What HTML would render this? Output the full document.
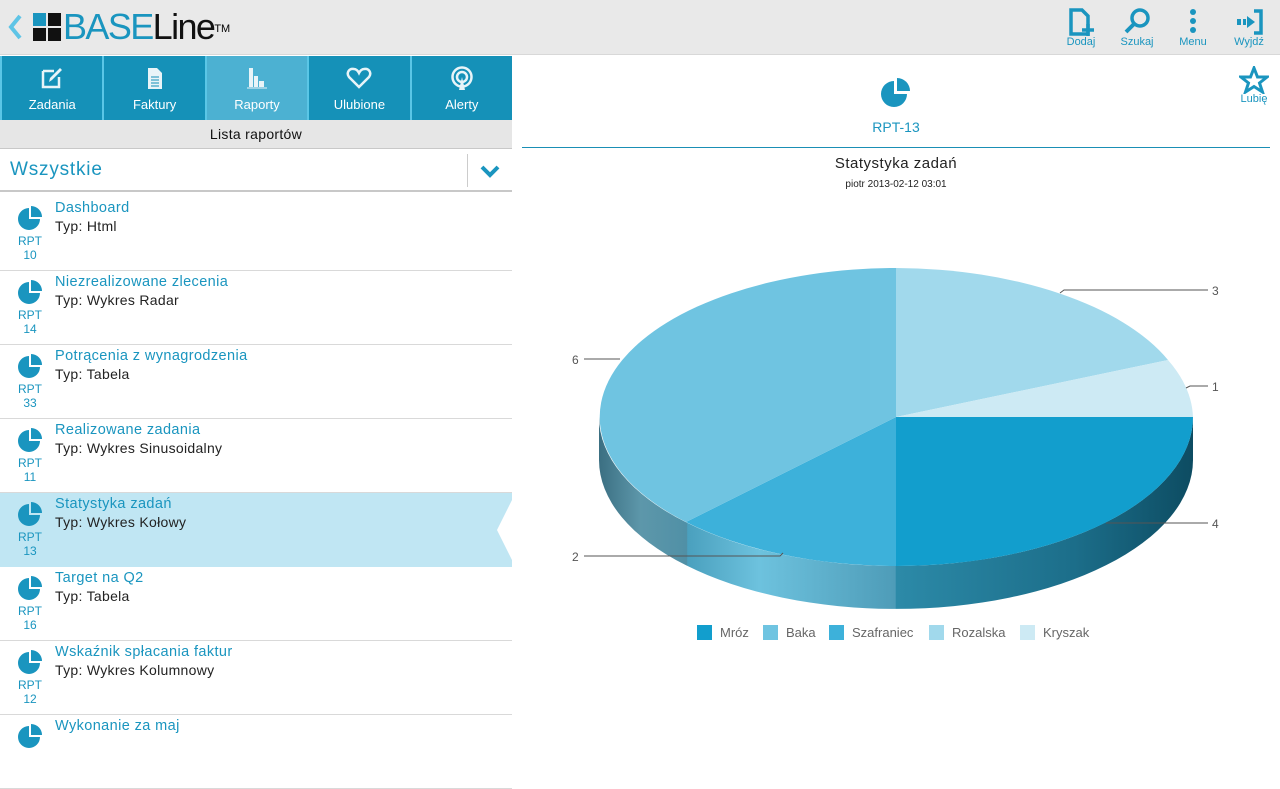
<!DOCTYPE html>
<html><head><meta charset="utf-8"><style>
*{margin:0;padding:0;box-sizing:border-box}
body{width:1280px;height:726px;overflow:hidden;background:#fff;font-family:"Liberation Sans",sans-serif;position:relative}
.hdr{position:absolute;left:0;top:0;width:1280px;height:55px;background:#e9e9e9;border-bottom:1px solid #d8d8d8}
.abs{position:absolute}
.tabs{position:absolute;left:0;top:56px;width:512px;height:64px;background:#1591b8;display:flex}
.tab{flex:1;border-left:2px solid #5ac6e6;color:#fff;font-size:13px;text-align:center;position:relative}
.tab span{position:absolute;left:0;right:0;top:41px}
.tab svg{position:absolute;left:50%;top:10px;transform:translateX(-50%)}
.lista{position:absolute;left:0;top:120px;width:512px;height:29px;background:#e6e6e6;border-bottom:1px solid #c8c8c8;text-align:center;font-size:14px;line-height:28px;color:#111;letter-spacing:.3px}
.dd{position:absolute;left:0;top:149px;width:512px;height:43px;background:#fff;border-bottom:2px solid #c8c8c8}
.item{position:absolute;left:0;width:512px;height:74px;border-bottom:1px solid #d9d9d9}
.item .t{position:absolute;left:55px;top:3px;color:#1a95bf;font-size:14.5px;letter-spacing:.4px}
.item .s{position:absolute;left:55px;top:21px;color:#222;font-size:14px;letter-spacing:.3px}
.item .r{position:absolute;left:10px;top:37px;width:40px;text-align:center;color:#1a95bf;font-size:12px;line-height:14px}
.item svg{position:absolute;left:17px;top:8px}
.hb{position:absolute;color:#1a95bf;font-size:11px;text-align:center;width:50px}
</style></head><body>
<div class="hdr"></div>
<svg class="abs" style="left:4px;top:12px" width="20" height="30"><path d="M16 4 L7 15 L16 26" stroke="#5ec4e6" stroke-width="4" fill="none"/></svg>
<div class="abs" style="left:33px;top:13px;width:13px;height:13px;background:#1a95bf"></div>
<div class="abs" style="left:48px;top:13px;width:13px;height:13px;background:#111"></div>
<div class="abs" style="left:33px;top:28px;width:13px;height:13px;background:#111"></div>
<div class="abs" style="left:48px;top:28px;width:13px;height:13px;background:#111"></div>
<div class="abs" style="left:63px;top:6px;font-size:36px;letter-spacing:-1.6px;line-height:42px"><span style="color:#1a95bf">BASE</span><span style="color:#111">Line</span><sup style="font-size:11px;vertical-align:top;position:relative;top:2px;letter-spacing:0">TM</sup></div>

<svg class="abs" style="left:1068px;top:8px" width="28" height="28"><path d="M3 2 H14 L20 8 V26 H3 Z" fill="none" stroke="#1a95bf" stroke-width="3.5"/><path d="M20 16 V28 M14 22 H26" stroke="#1a95bf" stroke-width="3.5"/></svg>
<svg class="abs" style="left:1122px;top:7px" width="30" height="28"><circle cx="18" cy="11" r="8" fill="none" stroke="#1a95bf" stroke-width="3.5"/><path d="M12 17 L4 25" stroke="#1a95bf" stroke-width="4"/></svg>
<svg class="abs" style="left:1185px;top:8px" width="16" height="28"><circle cx="8" cy="4" r="3" fill="#1a95bf"/><circle cx="8" cy="13" r="3" fill="#1a95bf"/><circle cx="8" cy="22" r="3" fill="#1a95bf"/></svg>
<svg class="abs" style="left:1235px;top:9px" width="30" height="26"><path d="M2 10h4v6H2zM8 10h3v6H8z" fill="#1a95bf"/><path d="M12 7 L20 13 L12 19 Z M12 10 H14 V16 H12Z" fill="#1a95bf"/><path d="M19 2 H26 V24 H19" fill="none" stroke="#1a95bf" stroke-width="3.5"/></svg>
<div class="hb" style="left:1056px;top:36px">Dodaj</div>
<div class="hb" style="left:1112px;top:36px">Szukaj</div>
<div class="hb" style="left:1168px;top:36px">Menu</div>
<div class="hb" style="left:1224px;top:36px">Wyjdź</div>

<div class="tabs">
<div class="tab"><svg width="24" height="24"><path d="M3 5h11M3 5v16h16v-10" fill="none" stroke="#e8f4f8" stroke-width="2.5"/><path d="M9 16 L10 12 L20 2 L22 4 L12 14 Z" fill="#e8f4f8"/></svg><span>Zadania</span></div>
<div class="tab"><svg width="24" height="24"><path d="M5 2h9l5 5v16H5z" fill="#e8f4f8"/><path d="M8 11h8M8 14h8M8 17h8M8 20h8" stroke="#1591b8" stroke-width="1"/></svg><span>Faktury</span></div>
<div class="tab" style="background:#4cb1d2"><svg width="24" height="24"><path d="M4 2h4v19H4zM9 10h4v11H9zM14 15h5v6h-5z" fill="#e8f4f8"/><path d="M2 22h20" stroke="#e8f4f8"/></svg><span>Raporty</span></div>
<div class="tab"><svg width="26" height="24"><path d="M13 21 L3 11 C0 7 3 2 8 3 C10 3 12 5 13 7 C14 5 16 3 18 3 C23 2 26 7 23 11 Z" fill="none" stroke="#e8f4f8" stroke-width="2.5"/></svg><span>Ulubione</span></div>
<div class="tab"><svg width="26" height="26"><circle cx="13" cy="11" r="9.5" fill="none" stroke="#e8f4f8" stroke-width="2.5"/><circle cx="13" cy="11" r="5" fill="none" stroke="#e8f4f8" stroke-width="2.5"/><path d="M10 24 L13 11 L16 24Z" fill="#e8f4f8"/></svg><span>Alerty</span></div>
</div>
<div class="lista">Lista raportów</div>
<div class="dd"><div class="abs" style="left:10px;top:10px;font-size:19px;color:#1a95bf;letter-spacing:.8px">Wszystkie</div><div class="abs" style="left:467px;top:5px;width:1px;height:33px;background:#ccc"></div><svg class="abs" style="left:480px;top:15px" width="20" height="14"><path d="M2 3 L10 11 L18 3" fill="none" stroke="#1a95bf" stroke-width="4"/></svg></div>

<div class="item" style="top:197px"><svg width="26" height="26"><path d="M12 3 A11 11 0 1 0 23 14 H12Z" fill="#1a95bf"/><path d="M14 1 A11 11 0 0 1 25 12 H14Z" fill="#1a95bf"/></svg><div class="t">Dashboard</div><div class="s">Typ: Html</div><div class="r">RPT<br>10</div></div>
<div class="item" style="top:271px"><svg width="26" height="26"><path d="M12 3 A11 11 0 1 0 23 14 H12Z" fill="#1a95bf"/><path d="M14 1 A11 11 0 0 1 25 12 H14Z" fill="#1a95bf"/></svg><div class="t">Niezrealizowane zlecenia</div><div class="s">Typ: Wykres Radar</div><div class="r">RPT<br>14</div></div>
<div class="item" style="top:345px"><svg width="26" height="26"><path d="M12 3 A11 11 0 1 0 23 14 H12Z" fill="#1a95bf"/><path d="M14 1 A11 11 0 0 1 25 12 H14Z" fill="#1a95bf"/></svg><div class="t">Potrącenia z wynagrodzenia</div><div class="s">Typ: Tabela</div><div class="r">RPT<br>33</div></div>
<div class="item" style="top:419px"><svg width="26" height="26"><path d="M12 3 A11 11 0 1 0 23 14 H12Z" fill="#1a95bf"/><path d="M14 1 A11 11 0 0 1 25 12 H14Z" fill="#1a95bf"/></svg><div class="t">Realizowane zadania</div><div class="s">Typ: Wykres Sinusoidalny</div><div class="r">RPT<br>11</div></div>
<div class="item" style="top:493px;background:#c0e6f3;border-bottom:none"><svg width="26" height="26"><path d="M12 3 A11 11 0 1 0 23 14 H12Z" fill="#1a95bf"/><path d="M14 1 A11 11 0 0 1 25 12 H14Z" fill="#1a95bf"/></svg><div class="t">Statystyka zadań</div><div class="s">Typ: Wykres Kołowy</div><div class="r">RPT<br>13</div><svg style="position:absolute;left:496px;top:7px" width="16" height="60"><path d="M16 0 L1 30 L16 60Z" fill="#fff"/></svg></div>
<div class="item" style="top:567px"><svg width="26" height="26"><path d="M12 3 A11 11 0 1 0 23 14 H12Z" fill="#1a95bf"/><path d="M14 1 A11 11 0 0 1 25 12 H14Z" fill="#1a95bf"/></svg><div class="t">Target na Q2</div><div class="s">Typ: Tabela</div><div class="r">RPT<br>16</div></div>
<div class="item" style="top:641px"><svg width="26" height="26"><path d="M12 3 A11 11 0 1 0 23 14 H12Z" fill="#1a95bf"/><path d="M14 1 A11 11 0 0 1 25 12 H14Z" fill="#1a95bf"/></svg><div class="t">Wskaźnik spłacania faktur</div><div class="s">Typ: Wykres Kolumnowy</div><div class="r">RPT<br>12</div></div>
<div class="item" style="top:715px"><svg width="26" height="26"><path d="M12 3 A11 11 0 1 0 23 14 H12Z" fill="#1a95bf"/><path d="M14 1 A11 11 0 0 1 25 12 H14Z" fill="#1a95bf"/></svg><div class="t">Wykonanie za maj</div></div>

<svg class="abs" style="left:880px;top:77px" width="34" height="32"><path d="M14 4 A13 13 0 1 0 27 17 H14Z" fill="#1a95bf"/><path d="M17 1 A13 13 0 0 1 30 14 H17Z" fill="#1a95bf"/></svg>
<div class="abs" style="left:846px;top:119px;width:100px;text-align:center;color:#1a95bf;font-size:14px">RPT-13</div>
<svg class="abs" style="left:1239px;top:66px" width="30" height="28"><path d="M15 2 L18.5 11 L28 11 L20.5 17 L23.5 26 L15 20.5 L6.5 26 L9.5 17 L2 11 L11.5 11 Z" fill="none" stroke="#1a95bf" stroke-width="3"/></svg>
<div class="hb" style="left:1229px;top:93px">Lubię</div>
<div class="abs" style="left:522px;top:147px;width:748px;height:1px;background:#1a8fb5"></div>
<div class="abs" style="left:746px;top:155px;width:300px;text-align:center;font-size:15px;color:#222;letter-spacing:.5px">Statystyka zadań</div>
<div class="abs" style="left:746px;top:179px;width:300px;text-align:center;font-size:10px;color:#222">piotr 2013-02-12 03:01</div>

<svg class="abs" style="left:0;top:0" width="1280" height="726">
<defs>
<linearGradient id="g1" x1="599" x2="1193" y1="0" y2="0" gradientUnits="userSpaceOnUse">
<stop offset="0" stop-color="#3b6f82"/><stop offset="0.07" stop-color="#5d97aa"/><stop offset="0.148" stop-color="#5090a6"/>
<stop offset="0.149" stop-color="#4aa0be"/><stop offset="0.27" stop-color="#6dc2de"/><stop offset="0.499" stop-color="#4e9cb8"/>
<stop offset="0.5" stop-color="#2c8aa8"/><stop offset="0.8" stop-color="#1c6e8a"/><stop offset="1" stop-color="#0d4c62"/>
</linearGradient>
</defs>
<path d="M599 417 A297 149 0 0 0 1193 417 L1193 460 A297 149 0 0 1 599 460 Z" fill="url(#g1)"/>
<path d="M896 417 L1193 417 A297 149 0 0 1 896 566 Z" fill="#129ecd"/>
<path d="M896 417 L896 566 A297 149 0 0 1 686 522 Z" fill="#3db1da"/>
<path d="M896 417 L686 522 A297 149 0 0 1 896 268 Z" fill="#6fc4e1"/>
<path d="M896 417 L896 268 A297 149 0 0 1 1168 360 Z" fill="#a1d9ec"/>
<path d="M896 417 L1168 360 A297 149 0 0 1 1193 417 Z" fill="#cdeaf4"/>
<g stroke="#555" fill="none" stroke-width="1">
<path d="M1060 293 L1064 290 H1208"/><path d="M1186 388 L1190 386 H1208"/><path d="M1106 523 H1208"/><path d="M584 556 H780 L783 553"/><path d="M584 359 H620"/>
</g>
<g font-family="Liberation Sans" font-size="12" fill="#555">
<text x="1212" y="295">3</text><text x="1212" y="391">1</text><text x="1212" y="528">4</text><text x="572" y="561">2</text><text x="572" y="364">6</text>
</g>
<g font-family="Liberation Sans" font-size="13" fill="#666">
<rect x="697" y="625" width="15" height="15" fill="#129ecd"/><text x="720" y="637">Mróz</text>
<rect x="763" y="625" width="15" height="15" fill="#6fc4e1"/><text x="786" y="637">Baka</text>
<rect x="829" y="625" width="15" height="15" fill="#3db1da"/><text x="852" y="637">Szafraniec</text>
<rect x="929" y="625" width="15" height="15" fill="#a1d9ec"/><text x="952" y="637">Rozalska</text>
<rect x="1020" y="625" width="15" height="15" fill="#cdeaf4"/><text x="1043" y="637">Kryszak</text>
</g>
</svg>
</body></html>
